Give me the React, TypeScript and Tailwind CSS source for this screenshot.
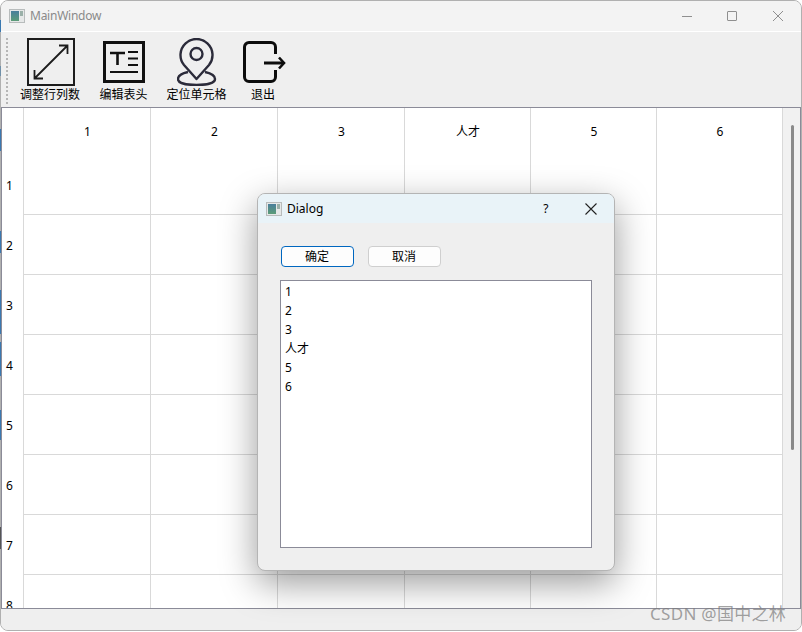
const uiFont = "font-['Noto_Sans','Noto_Sans_CJK_SC',sans-serif]";

const columns = ["1", "2", "3", "人才", "5", "6"];
const rows = ["1", "2", "3", "4", "5", "6", "7", "8"];

// bits of the desktop showing past the window's left edge
const edgeBits = [
  { top: 20, height: 12, color: "#3a78b0" },
  { top: 66, height: 10, color: "#6f8fa8" },
  { top: 129, height: 22, color: "#3a78b0" },
  { top: 231, height: 22, color: "#3a78b0" },
  { top: 290, height: 44, color: "#3a78b0" },
  { top: 342, height: 34, color: "#3a78b0" },
  { top: 410, height: 30, color: "#3a78b0" },
  { top: 527, height: 22, color: "#555555" },
];

function AppIcon({ className }: { className: string }) {
  return (
    <svg viewBox="0 0 16 16" className={className}>
      <defs>
        <linearGradient id="appIconFill" x1="0" y1="0" x2="0" y2="1">
          <stop offset="0" stopColor="#4a7f9c" />
          <stop offset="1" stopColor="#5c9c78" />
        </linearGradient>
      </defs>
      <rect x="0.5" y="1.5" width="15" height="13" fill="#e6e8e8" stroke="#b8bcbc" />
      <rect x="2" y="3" width="8" height="10" fill="url(#appIconFill)" />
      <rect x="11" y="3" width="3" height="5" fill="#9ab0a8" />
    </svg>
  );
}

function ResizeIcon() {
  return (
    <svg viewBox="0 0 48 48" className="ml-[2px] h-12 w-12" fill="none" stroke="#1c1c1c">
      <rect x="1" y="1" width="46" height="46" strokeWidth="2" />
      <path d="M7.500 40.500 40.500 7.500M32 7.500h8.500V16M7.500 32v8.500H16" strokeWidth="1.800" />
    </svg>
  );
}

function HeaderEditIcon() {
  return (
    <svg viewBox="0 0 42 42" className="h-[42px] w-[42px]" fill="none" stroke="#111">
      <rect x="1.500" y="1.500" width="39" height="39" strokeWidth="3" />
      <path d="M7 12h15M14.500 12v12" strokeWidth="2.600" />
      <path d="M25 11h10M25 17.500h10M25 24h10M7 31h28" strokeWidth="2" />
    </svg>
  );
}

function PinIcon() {
  return (
    <svg viewBox="0 0 40 48" className="h-12 w-10" fill="none" stroke="#2b2b3a" strokeWidth="2.400">
      <path d="M19.500 41 7 27A16 16 0 1 1 32 27Z" strokeLinejoin="round" />
      <circle cx="19.500" cy="16" r="6" />
      <path d="M11 34C4 35.500 1 38 1 41 1 45 9 47 19.500 47S38 45 38 41C38 38 35 35.500 28 34" />
    </svg>
  );
}

function ExitIcon() {
  return (
    <svg viewBox="0 0 43 42" className="ml-[2px] h-[42px] w-[43px]" fill="none" stroke="#0c0c0c">
      <path
        d="M32.500 13V6A4.500 4.500 0 0 0 28 1.500H6A4.500 4.500 0 0 0 1.500 6v30A4.500 4.500 0 0 0 6 40.500h22a4.500 4.500 0 0 0 4.500-4.500v-7"
        strokeWidth="3"
      />
      <path d="M21 22h19" strokeWidth="3" />
      <path d="M36 16.500 41 22l-5 5.500" strokeWidth="2.600" />
    </svg>
  );
}

function ToolButton({
  icon,
  label,
  width,
}: {
  icon: React.ReactNode;
  label: string;
  width: string;
}) {
  return (
    <div className={`flex flex-col items-center ${width}`}>
      <div className="flex h-[48px] items-center">{icon}</div>
      <span className="mt-[1px] whitespace-nowrap text-[12px] leading-[16px] text-black">{label}</span>
    </div>
  );
}

function Table() {
  return (
    <div className="flex h-[502px] border border-[#8b8b98] bg-white">
      <div className="flex-1 overflow-hidden">
        <div className="grid grid-cols-[22px_127px_127px_127px_126px_126px_126px] grid-rows-[47px_repeat(8,60px)]">
          <div className="border-r border-[#d9d9d9]" />
          {columns.map((c) => (
            <div
              key={c}
              className="flex items-center justify-center border-r border-[#d9d9d9] pl-[1px] text-[12px] text-black"
            >
              {c}
            </div>
          ))}
          {rows.map((r) => (
            <div key={r} className="contents">
              <div className="flex items-center border-r border-[#d9d9d9] pt-[1px] pl-[4px] text-[12px] text-black">
                {r}
              </div>
              {columns.map((c) => (
                <div key={c} className="border-r border-b border-[#d9d9d9]" />
              ))}
            </div>
          ))}
        </div>
      </div>
      <div className="w-[17px] bg-[#f1f1f1] pt-[17px] pl-[8px]">
        <div className="h-[325px] w-[3px] rounded-full bg-[#8a8a8a]" />
      </div>
    </div>
  );
}

function Dialog() {
  return (
    <div className="absolute top-[193px] left-[257px] flex h-[378px] w-[358px] flex-col overflow-hidden rounded-[8px] border border-[#b4b4b4] bg-[#efefef] shadow-[0_12px_36px_rgba(0,0,0,0.4)]">
      <div className="flex h-[29px] items-center bg-[#e9f3f8] pl-[8px]">
        <AppIcon className="h-[16px] w-[16px]" />
        <span className="ml-[5px] text-[12px] text-black">Dialog</span>
        <span className="ml-[220px] text-[12px] text-black">?</span>
        <svg viewBox="0 0 12 12" className="ml-[36px] h-[12px] w-[12px]" stroke="#222" strokeWidth="1.100">
          <path d="M.5.5l11 11M11.500.5l-11 11" />
        </svg>
      </div>
      <div className="flex gap-[14px] pt-[23px] pl-[23px]">
        <button className="h-[21px] w-[73px] rounded-[4px] border border-[#0067c0] bg-[#fdfdfd] pr-[1px] text-[12px] text-black">
          确定
        </button>
        <button className="h-[21px] w-[73px] rounded-[4px] border border-[#cfcfcf] bg-[#fdfdfd] pr-[1px] text-[12px] text-black">
          取消
        </button>
      </div>
      <div className="mt-[13px] ml-[22px] h-[268px] w-[312px] border border-[#8b8b98] bg-white pt-[1px] pl-[4px]">
        {columns.map((c) => (
          <div key={c} className="h-[19px] text-[12px] leading-[19px] text-black">
            {c}
          </div>
        ))}
      </div>
    </div>
  );
}

export default function App() {
  return (
    <div className={`relative h-[632px] w-[802px] overflow-hidden bg-white ${uiFont}`}>
      <div className="flex h-[631px] flex-col overflow-hidden rounded-[8px] border border-[#b0b0b0] bg-[#efefef]">
        <div className="flex h-[31px] items-center border-b border-white bg-[#f3f3f3] pl-[8px]">
          <AppIcon className="h-[16px] w-[16px]" />
          <span className="ml-[5px] text-[12px] tracking-[-0.25px] text-[#8a8a8a]">MainWindow</span>
          <div className="ml-auto flex items-center pr-[18px]">
            <div className="h-px w-[10px] bg-[#8f8f8f]" />
            <div className="ml-[35px] h-[10px] w-[10px] rounded-[1px] border border-[#8f8f8f]" />
            <svg viewBox="0 0 10 10" className="ml-[36px] h-[10px] w-[10px]" stroke="#8f8f8f">
              <path d="M0 0l10 10M10 0 0 10" />
            </svg>
          </div>
        </div>
        <div className="flex h-[75px] items-start pt-[6px] pl-[5px]">
          <div className="mr-[5px] h-[66px] w-[2px] border-l-2 border-dotted border-[#b5b5b5]" />
          <ToolButton icon={<ResizeIcon />} label="调整行列数" width="w-[74px]" />
          <ToolButton icon={<HeaderEditIcon />} label="编辑表头" width="w-[73px]" />
          <ToolButton icon={<PinIcon />} label="定位单元格" width="w-[73px]" />
          <ToolButton icon={<ExitIcon />} label="退出" width="w-[60px]" />
        </div>
        <Table />
        <div className="flex-1 bg-[#efefef]" />
      </div>
      {edgeBits.map((b) => (
        <div
          key={b.top}
          className="absolute left-0 w-px"
          style={{ top: b.top, height: b.height, backgroundColor: b.color }}
        />
      ))}
      <Dialog />
      <span className="absolute top-[603px] left-[650px] text-[17px] leading-[22px] tracking-[0.3px] text-[#7a7a7a]/70">
        CSDN @国中之林
      </span>
    </div>
  );
}
